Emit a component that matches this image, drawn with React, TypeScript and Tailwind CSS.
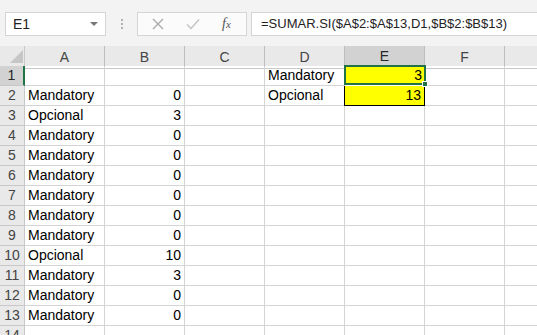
import React from 'react';

const cols = ['A', 'B', 'C', 'D', 'E', 'F', ''];

type Row = { a?: string; b?: string; d?: string; e?: string };

const rows: Row[] = [
  { d: 'Mandatory', e: '3' },
  { a: 'Mandatory', b: '0', d: 'Opcional', e: '13' },
  { a: 'Opcional', b: '3' },
  { a: 'Mandatory', b: '0' },
  { a: 'Mandatory', b: '0' },
  { a: 'Mandatory', b: '0' },
  { a: 'Mandatory', b: '0' },
  { a: 'Mandatory', b: '0' },
  { a: 'Mandatory', b: '0' },
  { a: 'Opcional', b: '10' },
  { a: 'Mandatory', b: '3' },
  { a: 'Mandatory', b: '0' },
  { a: 'Mandatory', b: '0' },
  {},
];

const gridCols = 'grid grid-cols-[25px_80px_80px_80px_80px_80px_80px_80px] w-[585px]';

const Toolbar: React.FC = () => (
  <div className="h-[46px] bg-[#f3f3f3] flex items-start pt-3 pl-[5px]">
    <div className="w-[101px] h-6 bg-white border border-[#d4d4d4] flex items-center pl-[7px] pr-[7px] justify-between">
      <span className="text-[14px] text-[#222]">E1</span>
      <span className="w-0 h-0 border-l-[4px] border-r-[4px] border-t-[4px] border-l-transparent border-r-transparent border-t-[#777]" />
    </div>
    <div className="w-[31px] h-6 flex flex-col items-center justify-center gap-[2px]">
      <span className="w-[2px] h-[2px] bg-[#b0b0b0]" />
      <span className="w-[2px] h-[2px] bg-[#b0b0b0]" />
      <span className="w-[2px] h-[2px] bg-[#b0b0b0]" />
    </div>
    <div className="w-[110px] h-6 bg-[#fbfbfb] border border-[#d4d4d4] flex items-center">
      <svg width="12" height="12" viewBox="0 0 12 12" className="ml-[14px]">
        <path d="M1 1L11 11M11 1L1 11" stroke="#a9a9a9" strokeWidth="1.3" />
      </svg>
      <svg width="14" height="12" viewBox="0 0 14 12" className="ml-[22px]">
        <path d="M1 6.5L5 10.5L13 1.5" stroke="#c2c2c2" strokeWidth="1.4" fill="none" />
      </svg>
      <span className="ml-[22px] text-[14px] italic text-[#555] leading-none" style={{ fontFamily: '"Liberation Serif", serif' }}>
        f<span className="text-[11px]">x</span>
      </span>
    </div>
    <div className="ml-[4px] flex-1 h-6 bg-white border border-r-0 border-[#d4d4d4] flex items-center pl-[9px]">
      <span className="text-[13px] text-[#222] whitespace-nowrap">=SUMAR.SI($A$2:$A$13,D1,$B$2:$B$13)</span>
    </div>
  </div>
);

const Header: React.FC = () => (
  <div className={`${gridCols} h-5 bg-[#e9e9e9]`}>
    <div className="relative border-r border-b border-[#c8c8c8]">
      <svg width="13" height="13" viewBox="0 0 13 13" className="absolute left-[10px] top-[4px]">
        <path d="M13 0L13 13L0 13Z" fill="#c6c6c6" />
      </svg>
    </div>
    {cols.map((c, i) => (
      <div
        key={i}
        className={
          c === 'E'
            ? 'flex items-center justify-center bg-[#d2d2d2] border-r border-[#bdbdbd] border-b-2 border-b-[#217346] text-[14px] text-[#262626]'
            : 'flex items-center justify-center border-r border-b border-r-[#bdbdbd] border-b-[#c8c8c8] text-[14px] text-[#444]'
        }
      >
        {c}
      </div>
    ))}
  </div>
);

const cell = 'h-5 border-r border-b border-[#d4d4d4] text-[14px] text-black leading-[19px] overflow-hidden whitespace-nowrap';

export default function App() {
  return (
    <div className="w-[537px] h-[335px] overflow-hidden bg-white" style={{ fontFamily: '"Liberation Sans", Arial, sans-serif' }}>
      <Toolbar />
      <Header />
      {rows.map((r, i) => {
        const n = i + 1;
        return (
          <div key={n} className={`${gridCols} relative`}>
            <div
              className={
                n === 1
                  ? 'h-5 bg-[#d2d2d2] border-b border-[#c8c8c8] border-r-2 border-r-[#217346] text-[14px] text-[#262626] text-center leading-[19px]'
                  : 'h-5 bg-[#e9e9e9] border-b border-r border-[#c8c8c8] text-[14px] text-[#444] text-center leading-[19px]'
              }
            >
              {n}
            </div>
            <div className={`${cell} pl-[3px]`}>{r.a}</div>
            <div className={`${cell} pr-[3px] text-right`}>{r.b}</div>
            <div className={cell} />
            <div className={`${cell} pl-[3px]`}>{r.d}</div>
            <div
              className={
                n === 1
                  ? 'relative h-5 bg-[#ffff00] border-2 border-[#217346] -mt-px -ml-px w-[82px] text-[14px] text-right pr-[2px] leading-[17px] z-10'
                  : n === 2
                  ? 'h-5 bg-[#ffff00] border border-black border-t-0 -ml-px w-[81px] text-[14px] text-right pr-[3px] leading-[19px]'
                  : cell
              }
            >
              {r.e}
              {n === 1 && <span className="absolute -right-[4px] -bottom-[4px] w-[6px] h-[6px] bg-[#217346] border border-white" />}
            </div>
            <div className={cell} />
            <div className={cell} />
          </div>
        );
      })}
    </div>
  );
}
